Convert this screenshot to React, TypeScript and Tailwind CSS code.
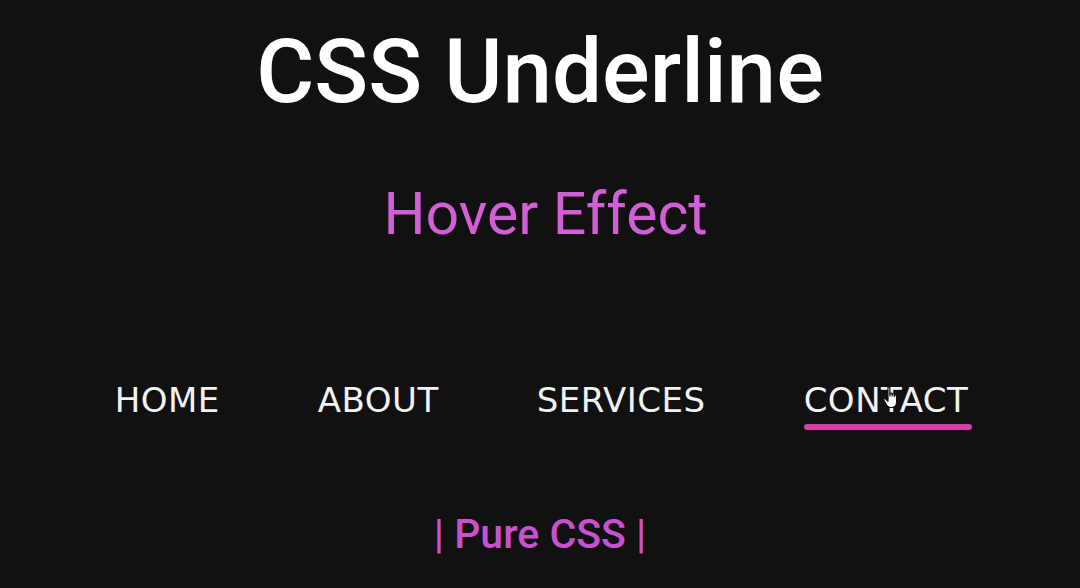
import { ReactNode } from 'react'

const links = ['HOME', 'ABOUT', 'SERVICES', 'CONTACT']

function HandCursor() {
  return (
    <svg
      className="absolute left-[78px] top-[2px] w-[20px] h-[26px]"
      viewBox="0 0 20 26"
      fill="#ffffff"
      stroke="#111111"
      strokeWidth={1.2}
      strokeLinejoin="round"
    >
      <path d="M6 2.5c0-1.1 1.9-1.1 1.9 0V11l0.3-2.2c0.3-1 1.8-0.9 1.9 0.1V11l0.4-1.6c0.3-1 1.8-0.8 1.8 0.2v1.9l0.5-1.1c0.4-0.9 1.8-0.6 1.8 0.4v6.2c0 3-1.8 5.5-5 5.5H8.4c-1.8 0-2.9-1-3.8-2.4L1.8 15c-0.6-1 0.6-2.1 1.5-1.3L6 16.2z" />
    </svg>
  )
}

function NavLink({ label, active }: { label: string; active?: boolean }) {
  return (
    <div className="relative flex flex-col">
      <span className="text-[34px] leading-none tracking-[0.5px] text-[#f2f2f2]">{label}</span>
      <span
        className={
          active
            ? 'mt-[7px] -mr-[4px] h-[6px] rounded-full bg-[#d63fa8]'
            : 'mt-[7px] h-[6px] w-0'
        }
      />
      {active && <HandCursor />}
    </div>
  )
}

function Heading({ children }: { children: ReactNode }) {
  return <h1 className="text-[89px] leading-none font-medium text-white">{children}</h1>
}

export default function App() {
  return (
    <div className="w-[1080px] h-[588px] overflow-hidden bg-[#111111] flex flex-col items-center pt-[27px] font-['Roboto',sans-serif]">
      <Heading>CSS Underline</Heading>

      <h2 className="mt-[68px] pl-[11px] text-[59px] leading-none text-[#d35fd6]">Hover Effect</h2>

      {/* Nav */}
      <nav className="mt-[140px] flex gap-[98px] pl-[3px] font-['DejaVu_Sans',sans-serif]">
        {links.map((l) => (
          <NavLink key={l} label={l} active={l === 'CONTACT'} />
        ))}
      </nav>

      <p className="mt-[84px] text-[41px] leading-none font-medium text-[#c851cf]">| Pure CSS |</p>
    </div>
  )
}
